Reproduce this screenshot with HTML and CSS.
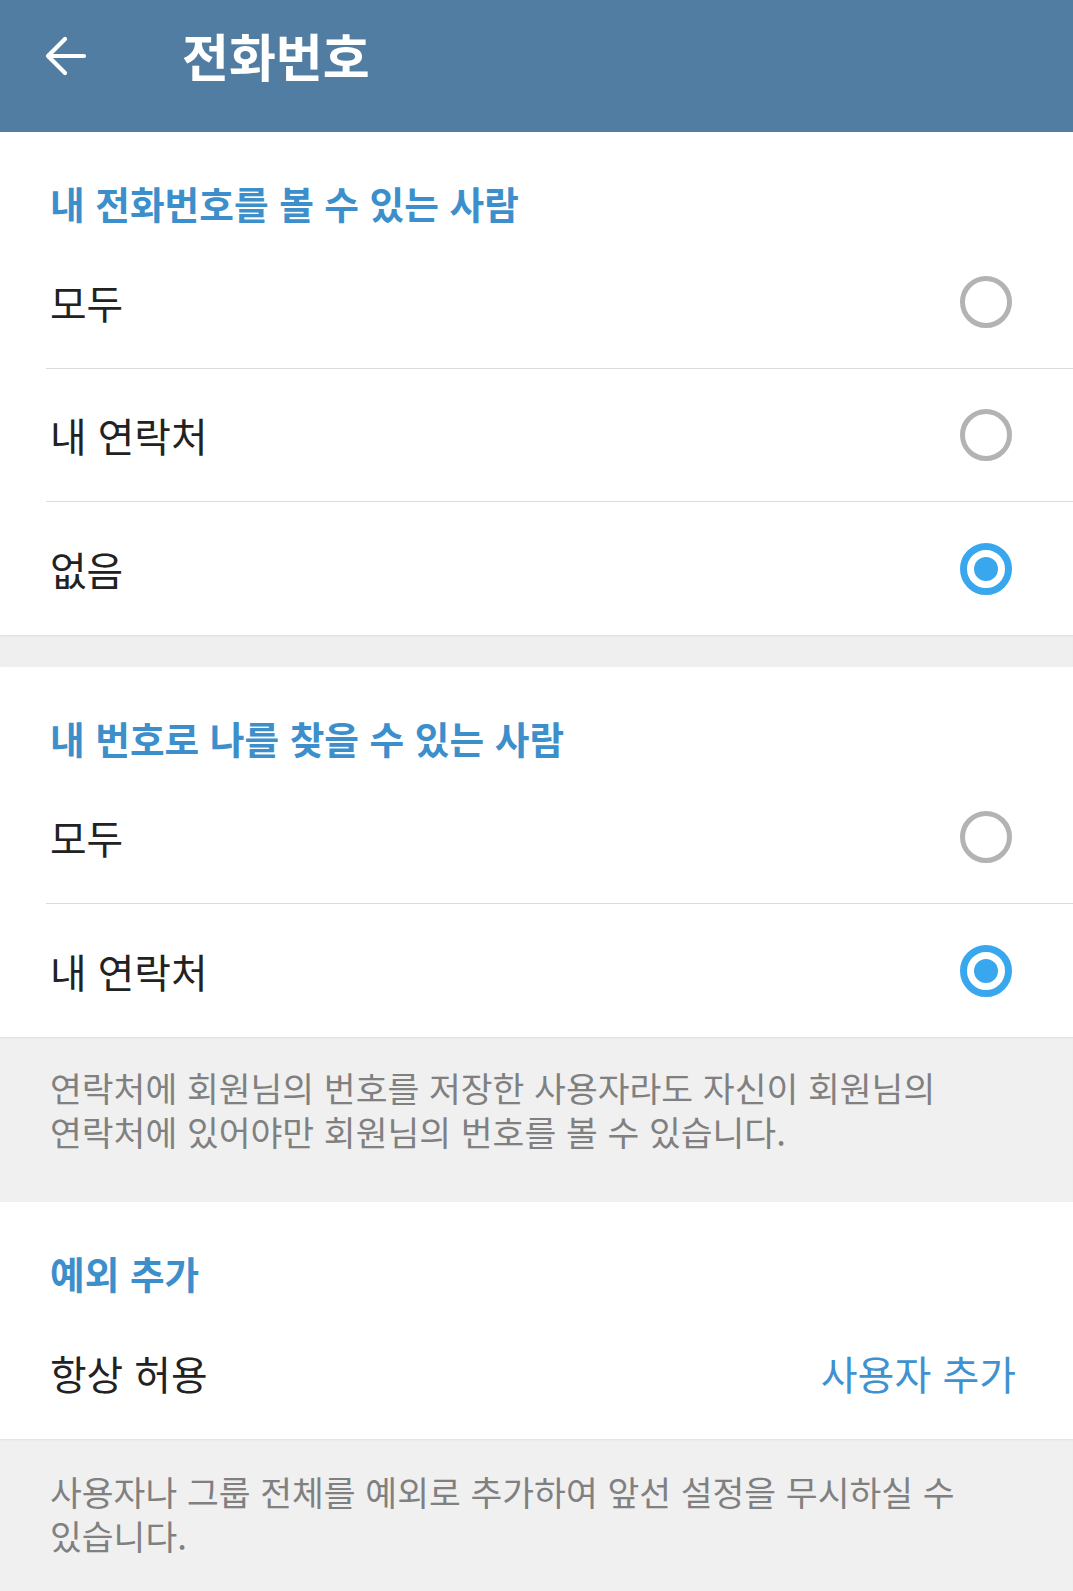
FILE: index.html
```html
<!DOCTYPE html>
<html lang="ko">
<head>
<meta charset="utf-8">
<title>전화번호</title>
<link rel="stylesheet" href="styles.css">
</head>
<body>
<header class="appbar">
  <svg class="back" width="44" height="44" viewBox="0 0 44 44">
    <path d="M5 21 H41 M5 21 L22 4 M5 21 L22 38" fill="none" stroke="#fff" stroke-width="4.2" stroke-linecap="round" stroke-linejoin="round"/>
  </svg>
  <h1 class="title">전화번호</h1>
</header>

<section class="card">
  <div class="sec-head">내 전화번호를 볼 수 있는 사람</div>
  <div class="row divided"><span class="label">모두</span><span class="radio"></span></div>
  <div class="row divided"><span class="label">내 연락처</span><span class="radio"></span></div>
  <div class="row"><span class="label">없음</span><span class="radio on"></span></div>
</section>

<div class="gap"></div>

<section class="card">
  <div class="sec-head">내 번호로 나를 찾을 수 있는 사람</div>
  <div class="row divided"><span class="label">모두</span><span class="radio"></span></div>
  <div class="row"><span class="label">내 연락처</span><span class="radio on"></span></div>
</section>

<div class="info info-first">연락처에 회원님의 번호를 저장한 사용자라도 자신이 회원님의 연락처에 있어야만 회원님의 번호를 볼 수 있습니다.</div>

<section class="card">
  <div class="sec-head">예외 추가</div>
  <div class="row"><span class="label">항상 허용</span><span class="value">사용자 추가</span></div>
</section>

<div class="info info-last">사용자나 그룹 전체를 예외로 추가하여 앞선 설정을 무시하실 수 있습니다.</div>
</body>
</html>
```

FILE: styles.css
```css
html, body {
  margin: 0;
  padding: 0;
}
body {
  width: 1073px;
  min-height: 1591px;
  background: #f0f0f0;
  font-family: "Noto Sans CJK KR", "Noto Sans", sans-serif;
  color: #222222;
  overflow: hidden;
  word-break: keep-all;
}
.appbar {
  height: 132px;
  box-sizing: border-box;
  padding-bottom: 22px;
  background: #527da3;
  display: flex;
  align-items: center;
}
.back {
  margin-left: 43px;
  margin-top: 4px;
  flex: none;
}
.title {
  margin: 0 0 0 95px;
  font-size: 51px;
  line-height: 1;
  font-weight: 700;
  color: #ffffff;
}
.card {
  background: #ffffff;
}
.sec-head {
  height: 104px;
  box-sizing: border-box;
  padding: 52px 0 0 50px;
  font-size: 37.7px;
  line-height: 37px;
  font-weight: 700;
  color: #3d8fcb;
}
.row {
  height: 133px;
  box-sizing: border-box;
  margin-left: 46px;
  padding: 0 61px 0 4px;
  display: flex;
  align-items: center;
  justify-content: space-between;
}
.row.divided {
  border-bottom: 1px solid #dcdcdc;
}
.label {
  font-size: 39.8px;
  line-height: 1;
  color: #222222;
}
.value {
  font-size: 40px;
  line-height: 1;
  color: #3f92cf;
  margin-right: -4px;
}
.radio {
  width: 52px;
  height: 52px;
  box-sizing: border-box;
  border: 5px solid #b3b3b3;
  border-radius: 50%;
  flex: none;
  display: flex;
  align-items: center;
  justify-content: center;
}
.radio.on {
  border: 7px solid #39a7ee;
}
.radio.on::after {
  content: "";
  width: 24px;
  height: 24px;
  border-radius: 50%;
  background: #39a7ee;
}
.gap {
  height: 32px;
  background: #efefef;
  box-shadow: inset 0 2px 2px -1px #dedede;
}
.info {
  background: #f0f0f0;
  box-shadow: inset 0 2px 2px -1px #e0e0e0;
  font-size: 34.6px;
  line-height: 44px;
  color: #808080;
  padding: 0 50px 0 50px;
}
.info-first {
  height: 165px;
  box-sizing: border-box;
  padding-top: 28px;
}
.info-last {
  height: 151px;
  box-sizing: border-box;
  padding-top: 30px;
}
```
